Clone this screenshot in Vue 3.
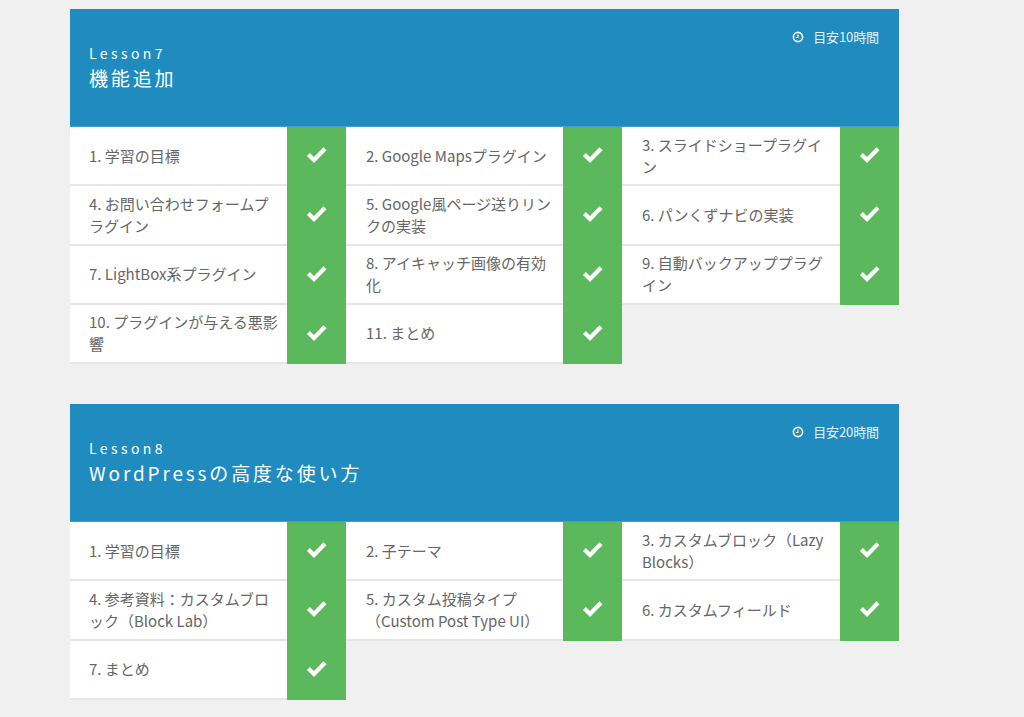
<script setup>
const lessons = [
  {
    label: "Lesson7",
    title: "機能追加",
    time: "目安10時間",
    items: [
      "1. 学習の目標",
      "2. Google Mapsプラグイン",
      "3. スライドショープラグイン",
      "4. お問い合わせフォームプラグイン",
      "5. Google風ページ送りリンクの実装",
      "6. パンくずナビの実装",
      "7. LightBox系プラグイン",
      "8. アイキャッチ画像の有効化",
      "9. 自動バックアッププラグイン",
      "10. プラグインが与える悪影響",
      "11. まとめ",
    ],
  },
  {
    label: "Lesson8",
    title: "WordPressの高度な使い方",
    time: "目安20時間",
    items: [
      "1. 学習の目標",
      "2. 子テーマ",
      "3. カスタムブロック（Lazy Blocks）",
      "4. 参考資料：カスタムブロック（Block Lab）",
      "5. カスタム投稿タイプ（Custom Post Type UI）",
      "6. カスタムフィールド",
      "7. まとめ",
    ],
  },
];
</script>

<template>
  <div class="page">
    <section v-for="lesson in lessons" :key="lesson.label" class="lesson">
      <header class="lesson-head">
        <div class="lesson-time">
          <svg class="clock" viewBox="0 0 12 12" width="12" height="12">
            <circle cx="6" cy="6" r="4.6" fill="none" stroke="#fff" stroke-width="1.6" />
            <path d="M6 3.6V6.5H3.9" fill="none" stroke="#fff" stroke-width="1.1" />
          </svg>
          <span>{{ lesson.time }}</span>
        </div>
        <p class="lesson-label">{{ lesson.label }}</p>
        <h2 class="lesson-title">{{ lesson.title }}</h2>
      </header>
      <ul class="items">
        <li v-for="item in lesson.items" :key="item" class="item">
          <span class="item-name">{{ item }}</span>
          <span class="item-check">
            <svg viewBox="0 0 22 17" width="22" height="17">
              <path d="M2.4 8.6 8 14 19 2.8" fill="none" stroke="#fff" stroke-width="4.2" stroke-linejoin="miter" />
            </svg>
          </span>
        </li>
      </ul>
    </section>
  </div>
</template>

<style scoped>
.page {
  width: 829px;
  margin-left: 70px;
  padding: 9px 0 17px;
  display: flex;
  flex-direction: column;
  gap: 40px;
  font-family: "Noto Sans CJK JP", sans-serif;
}
.lesson-head {
  position: relative;
  height: 118px;
  box-sizing: border-box;
  padding: 35px 19px 0;
  background: #1f8bbf;
  border-bottom: 1px solid #3fa0d0;
  color: #fff;
}
.lesson-label {
  margin: 0;
  font-size: 14px;
  line-height: 18px;
  letter-spacing: 3.4px;
}
.lesson-title {
  margin: 3px 0 0;
  font-size: 19px;
  line-height: 26px;
  font-weight: 400;
  letter-spacing: 2.85px;
}
.lesson-time {
  position: absolute;
  top: 20px;
  right: 20px;
  display: flex;
  align-items: center;
  gap: 9px;
  font-size: 13px;
  line-height: 16px;
  letter-spacing: -0.1px;
  color: #e8f3f9;
}
.items {
  list-style: none;
  margin: 0;
  padding: 0;
  display: grid;
  grid-template-columns: 276px 276px 277px;
}
.item {
  display: flex;
  height: 59.25px;
  box-sizing: border-box;
  background: #fff;
  border-bottom: 2px solid #e6e6e6;
}
.item-name {
  flex: 1;
  align-self: center;
  padding: 0 8px 0 20px;
  font-size: 15px;
  line-height: 22px;
  color: #666;
}
.item:nth-child(3n + 1) .item-name {
  padding-left: 19px;
}
.item-check {
  width: 59px;
  height: 59.25px;
  flex: none;
  display: flex;
  align-items: center;
  justify-content: center;
  padding-bottom: 4px;
  box-sizing: border-box;
  background: #5cb85c;
}
</style>

<style>
html,
body {
  background: #f0f0f0;
}
</style>
